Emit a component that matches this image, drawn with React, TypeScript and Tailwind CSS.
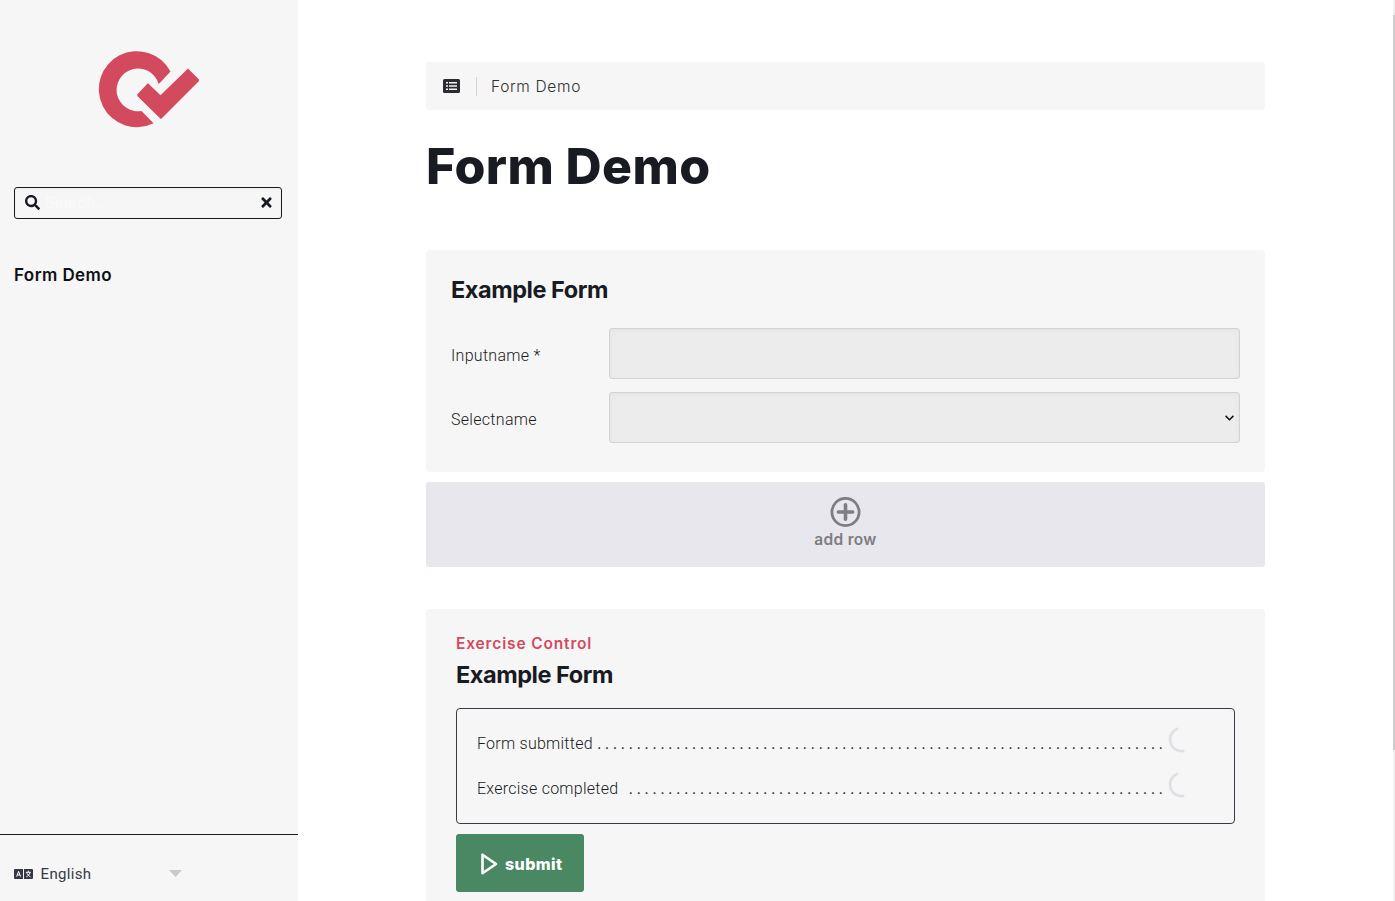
import { FaSearch, FaTimes } from "react-icons/fa";

function Logo() {
  return (
    <svg width="102" height="78" viewBox="0 0 102 78" className="block">
      <path
        d="M72.5 21.5 A38 38 0 1 0 55.5 73.3 L43.5 61 A21.4 21.4 0 1 1 60.4 33.4 Q61.2 33.6 62 32.7 Z"
        fill="#d34a5e"
      />
      <path d="M50 33.2 L62.5 45.2 L90 18.6 L101 29.5 V31 L63.3 68.8 H62.5 L39.3 46 V44.5 L49.5 33.6 Z" fill="#d34a5e" />
    </svg>
  );
}

function Spinner() {
  return (
    <svg width="28" height="28" viewBox="0 0 28 28" className="block shrink-0">
      <path d="M12.3 2.6 A11.5 11.5 0 0 0 18.3 24.8" fill="none" stroke="#dfdfe5" strokeWidth="2.6" />
    </svg>
  );
}

function StatusRow({ label, count }: { label: string; count: number }) {
  return (
    <div className="flex h-[45px] w-[712px] items-center">
      <span className="shrink-0 whitespace-nowrap text-[16px] font-light leading-6 tracking-[0.25px]">{label}</span>
      <span className="ml-auto whitespace-nowrap font-['Liberation_Sans'] text-[16px] font-light leading-6 text-[#33343b] [word-spacing:-0.98px]">
        {Array(count).fill(".").join(" ")}
      </span>
      <span className="mb-[7px] ml-[3px] flex w-[23px]">
        <Spinner />
      </span>
    </div>
  );
}

export default function App() {
  return (
    <div className="flex h-[901px] w-full overflow-hidden bg-white font-[Roboto,'Liberation_Sans',sans-serif] text-[#191b23]">
      <aside className="flex w-[298px] shrink-0 flex-col bg-[#f6f6f6]">
        <div className="flex pl-[98px] pt-[50px]">
          <Logo />
        </div>
        <div className="ml-[14px] mt-[59px] flex h-8 w-[268px] items-center rounded-[3px] border border-[#191b23] pl-[10px] pr-[7.5px] shadow-[inset_0_1px_3px_#ececec]">
          <FaSearch size={15} className="mb-[2px]" />
          <span className="ml-[5px] flex-1 text-[16px] tracking-[0.2px] text-[#fafafa]">Search...</span>
          <FaTimes size={15} className="mb-[2px]" />
        </div>
        <div className="ml-[14px] mt-[44px] whitespace-nowrap font-[Inter] text-[17px] font-semibold leading-6 tracking-[0.42px] text-[#0e1014]">Form Demo</div>
        <div className="mt-auto flex h-[67px] items-center border-t border-[#191b23] pl-[14px] pt-[11px]">
          <svg width="19" height="10" viewBox="0 0 19 10">
            <path d="M1 0h8v10H1a1 1 0 0 1-1-1V1a1 1 0 0 1 1-1zM10 0h8a1 1 0 0 1 1 1v8a1 1 0 0 1-1 1h-8z" fill="#373847" />
            <path d="M2.6 7.6 4.6 2.4 6.6 7.6M3.3 6h2.6M14.3 1.7v1.5M11.8 3.3h5M16 3.5c-.5 2-2 3.5-3.7 4.3M12.9 4.2c.7 1.6 2 2.9 3.6 3.6" stroke="#fff" strokeWidth="1" fill="none" />
          </svg>
          <span className="ml-[7.5px] w-[128.5px] text-[15px] leading-6 tracking-[0.35px] text-[#373847]">English</span>
          <svg width="13" height="7" viewBox="0 0 13 7"><path d="M0 0h13L6.5 7z" fill="#c9c9c9" /></svg>
        </div>
      </aside>

      <main className="ml-32 w-[839px] shrink-0 pt-[62px]">
        <nav className="flex h-12 items-center rounded-[3px] bg-[#f6f6f6] pl-[17px]">
          <svg width="17" height="14" viewBox="0 0 17 14">
            <rect width="17" height="14" rx="1.5" fill="#2b2b30" />
            <path d="M3 3.8h2M3 7h2M3 10.2h2M6 3.8h8M6 7h8M6 10.2h8" stroke="#f6f6f6" strokeWidth="1.6" />
          </svg>
          <span className="ml-4 h-[19px] w-px bg-[#d3d3d3]" />
          <span className="ml-[14px] mt-[2px] whitespace-nowrap font-['Inter'] text-[15.5px] font-light leading-6 tracking-[0.65px] text-[#303030]">Form Demo</span>
        </nav>
        <h1 className="mt-[26px] h-[60px] whitespace-nowrap font-[Inter] text-[50px] font-extrabold leading-[60px] tracking-[0.4px]">Form Demo</h1>

        <section className="mt-[54px] h-[222px] rounded-[4px] bg-[#f6f6f6] px-[25px] pt-[25px]">
          <h2 className="h-[30px] whitespace-nowrap font-[Inter] text-[23.5px] font-bold leading-[30px] tracking-[-0.45px]">Example Form</h2>
          <div className="mt-[23px] flex items-center">
            <label className="mt-[5px] w-[158px] text-[16px] font-light tracking-[0.3px]">Inputname *</label>
            <div className="h-[51px] flex-1 rounded-[3px] border border-[#d3d3d3] bg-[#ececec] shadow-[inset_0_1px_4px_#e2e2e2]" />
          </div>
          <div className="mt-[13px] flex items-center">
            <label className="mt-[5px] w-[158px] text-[16px] font-light tracking-[0.3px]">Selectname</label>
            <div className="flex h-[51px] flex-1 items-center justify-end rounded-[3px] border border-[#d3d3d3] bg-[#ececec] pr-[5px] shadow-[inset_0_1px_4px_#e2e2e2]">
              <svg width="9" height="6" viewBox="0 0 9 6"><path d="M.6.9 4.5 4.7 8.4.9" fill="none" stroke="#111" strokeWidth="1.5" /></svg>
            </div>
          </div>
        </section>

        <button className="mt-[10px] flex h-[85px] w-full flex-col items-center rounded-[3px] bg-[#e8e7ed] pt-[15px] text-[#7d7d82]">
          <svg width="31" height="30" viewBox="0 0 31 30" fill="none" stroke="currentColor" className="shrink-0">
            <circle cx="15.5" cy="15" r="13.6" strokeWidth="2.8" />
            <path d="M8.3 15h14.4M15.5 7.8v14.4" strokeWidth="3.6" strokeLinecap="round" />
          </svg>
          <span className="mt-px whitespace-nowrap font-[Inter] text-[15.5px] font-semibold leading-6 tracking-[0.3px]">add row</span>
        </button>

        <section className="mt-[42px] h-[340px] rounded-t-[4px] bg-[#f6f6f6] px-[30px] pt-[23px]">
          <div className="h-6 whitespace-nowrap font-[Inter] text-[15.5px] font-semibold leading-6 tracking-[0.85px] text-[#d34a5e]">Exercise Control</div>
          <h2 className="mt-1 h-[30px] whitespace-nowrap font-[Inter] text-[23.5px] font-bold leading-[30px] tracking-[-0.45px]">Example Form</h2>
          <div className="mt-[18px] h-[116px] rounded-[4px] border border-[#3a3b48] pl-5 pt-[12px]">
            <StatusRow label="Form submitted" count={72} />
            <StatusRow label="Exercise completed" count={68} />
          </div>
          <button className="mt-[10px] flex h-[58px] w-32 items-center rounded-[3px] bg-[#4a8863] pl-[25px] pt-px text-white">
            <svg width="17" height="22" viewBox="0 0 17 22"><path d="M1.5 1.7v18.6L15 11z" fill="none" stroke="currentColor" strokeWidth="2.6" strokeLinejoin="round" /></svg>
            <span className="ml-[7px] whitespace-nowrap font-[Inter] text-[16px] font-extrabold leading-6 tracking-[0.4px]">submit</span>
          </button>
        </section>
      </main>
      <div className="ml-auto h-full w-[2px] bg-[#f0f0f0] pt-[15px]">
        <div className="h-[735px] bg-[#cdcdcd]" />
      </div>
    </div>
  );
}
